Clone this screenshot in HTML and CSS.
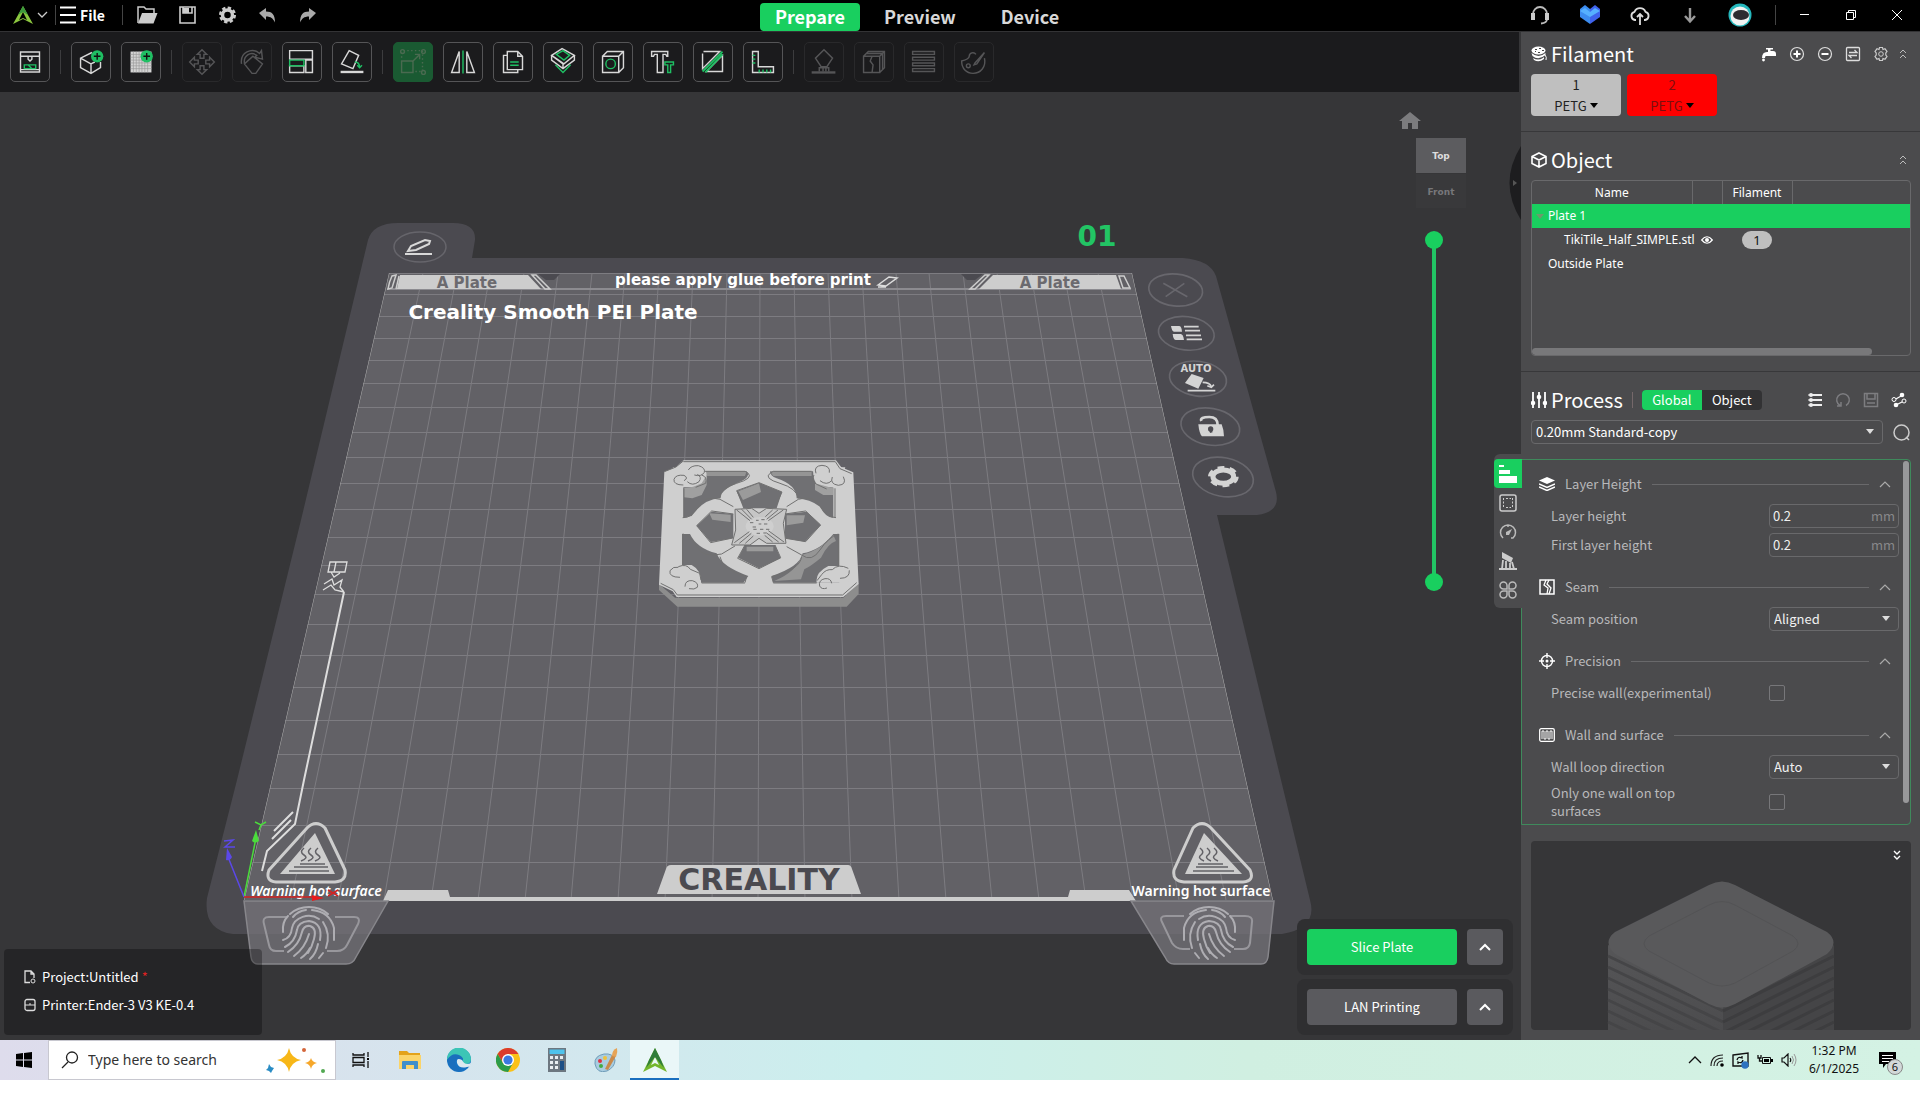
FILE: index.html
```html
<!DOCTYPE html>
<html lang="en">
<head>
<meta charset="utf-8">
<title>Creality Print</title>
<meta name="viewport" content="width=device-width, initial-scale=1">
<link rel="stylesheet" href="styles.css">
</head>
<body>
<header class="titlebar">
  <div class="title-left">
    <button class="icon-btn logo" aria-label="Application menu"><svg width="36" height="20" viewBox="0 0 36 20"><path d="M11 1 1 19l10-5 10 5zM11 7l4 8-4-2-4 2z" fill="#8cc63f" fill-rule="evenodd"/><path d="M11 1 6 10l5-3 5 3z" fill="#3c9a3c"/><path d="m26 8 4 4 5-5" fill="none" stroke="#ccc" stroke-width="1.3"/></svg></button>
    <span class="divider"></span>
    <button class="icon-btn file"><svg width="16" height="18" viewBox="0 0 16 18"><path d="M0 1.500h16M0 9h16M0 16.500h16" stroke="#fff" stroke-width="2"/></svg>File</button>
    <span class="divider"></span>
    <nav class="quick" aria-label="Quick actions">
      <button class="icon-btn" aria-label="Open"><svg width="21" height="18" viewBox="0 0 21 18"><path d="M1 17V1h6l2 2h8v4" fill="none" stroke="#ccc" stroke-width="1.500"/><path d="M5 7h15.500l-4 10.500H1z" fill="#ccc"/></svg></button>
      <button class="icon-btn" aria-label="Save"><svg width="21" height="18" viewBox="0 0 21 18"><path d="M3 1h15v16H3zM6 1h9v6H6z" fill="none" stroke="#ccc" stroke-width="1.600"/><path d="M6 2h6v5H6z" fill="#ccc"/></svg></button>
      <button class="icon-btn" aria-label="Settings"><svg width="21" height="18" viewBox="0 0 21 18"><circle cx="10.500" cy="9" r="5" fill="none" stroke="#ccc" stroke-width="3.500"/><circle cx="10.500" cy="9" r="7.300" fill="none" stroke="#ccc" stroke-width="2.400" stroke-dasharray="3.400 2.330"/></svg></button>
      <button class="icon-btn" aria-label="Undo"><svg width="21" height="18" viewBox="0 0 21 18"><path d="M2 7 9 2v3.500c6 0 9 3 9 11-2-4-4-6-9-6V14z" fill="#aaa"/></svg></button>
      <button class="icon-btn" aria-label="Redo"><svg width="21" height="18" viewBox="0 0 21 18"><path d="m19 7-7-5v3.500c-6 0-9 3-9 11 2-4 4-6 9-6V14z" fill="#aaa"/></svg></button>
    </nav>
  </div>
  <nav class="modes" aria-label="Mode">
    <button class="mode active">Prepare</button>
    <button class="mode">Preview</button>
    <button class="mode">Device</button>
  </nav>
  <div class="title-right">
    <button class="icon-btn r50" aria-label="Support"><svg width="20" height="20" viewBox="0 0 20 20"><path d="M3 9a7 7 0 0 1 14 0v5q0 4-6 4.500" fill="none" stroke="#bbb" stroke-width="1.800"/><path d="M1 8h4v7H1zM15 8h4v7h-4z" fill="#ccc"/></svg></button>
    <button class="icon-btn r50" aria-label="Model library"><svg width="20" height="20" viewBox="0 0 20 20"><path d="M0 4 5 0l5 4v15L0 12z" fill="#3c8cf0"/><path d="m10 4 5-4 5 4v8l-10 7z" fill="#3f63ec"/><path d="m0 6 5-3 5 4 5-4 5 3-10 6z" fill="#56b0ff"/></svg></button>
    <button class="icon-btn r50" aria-label="Upload"><svg width="20" height="20" viewBox="0 0 20 20"><path d="M6 15H5a4.200 4.200 0 0 1-.5-8.200 6 6 0 0 1 11 0A4.200 4.200 0 0 1 15 15h-1M10 20V9M7 12l3-3 3 3" fill="none" stroke="#ddd" stroke-width="1.800"/></svg></button>
    <button class="icon-btn r50" aria-label="Download"><svg width="20" height="20" viewBox="0 0 20 20"><path d="M10 3v13M5 11l5 5.500 5-5.500" fill="none" stroke="#999" stroke-width="2.400"/></svg></button>
    <button class="icon-btn r50" aria-label="Account"><svg width="24" height="24" viewBox="0 0 24 24"><circle cx="12" cy="12" r="11.500" fill="#25b8bd"/><circle cx="12" cy="13" r="9.500" fill="#f2f2f2"/><ellipse cx="13" cy="12" rx="8" ry="5" fill="#2d2b30"/></svg></button>
    <span class="divider win"></span>
    <button class="icon-btn r46" aria-label="Minimize"><svg width="12" height="12" viewBox="0 0 12 12"><path d="M1 5.500h9" stroke="#fff" stroke-width="1"/></svg></button>
    <button class="icon-btn r46" aria-label="Restore"><svg width="12" height="12" viewBox="0 0 12 12"><path d="M1.500 3.500h7v7h-7zM3.500 3.500v-2h7v7h-2" fill="none" stroke="#fff"/></svg></button>
    <button class="icon-btn r46" aria-label="Close"><svg width="12" height="12" viewBox="0 0 12 12"><path d="m1 1 10 10M11 1 1 11" stroke="#fff"/></svg></button>
  </div>
</header>

<div class="app">
<main class="work">
  <div class="toolbar" role="toolbar" aria-label="Tools">
    <button class="tool" aria-label="Printer"><svg viewBox="0 0 40 40"><path d="M10 9.500h20v21H10zM10 14h20M18 14v3l2 2 2-2v-3M10 28h20"/><path class="g" d="M14 23h12v4H14zM18 23l4 4"/></svg></button>
    <i class="sep"></i>
    <button class="tool" aria-label="Add model"><svg viewBox="0 0 40 40"><path d="M21 10 9 16v10l11 6 10-6V20M9 16l11 6v10M20 22l4-2"/><circle cx="26.500" cy="14" r="6.500" fill="#1fbf63" stroke="none"/><path d="M26.500 10.500v7M23 14h7" stroke="#111"/></svg></button>
    <button class="tool" aria-label="Add plate"><svg viewBox="0 0 40 40"><path d="M9 9h22v22H9z" fill="#d4d4d4" stroke="none"/><path d="M9 12h22M9 15h22M9 18h22M9 21h22M9 24h22M9 27h22M12 9v22M15 9v22M18 9v22M21 9v22M24 9v22M27 9v22" stroke="#999" stroke-width=".7"/><circle cx="26" cy="14" r="6.500" fill="#1fbf63" stroke="none"/><path d="M26 10.500v7M22.500 14h7" stroke="#111"/></svg></button>
    <i class="sep"></i>
    <button class="tool off" disabled aria-label="Move"><svg viewBox="0 0 40 40"><path d="m20 7 5 5h-3v4h-4v-4h-3zM20 33l5-5h-3v-4h-4v4h-3zM7 20l5-5v3h4v4h-4v3zM33 20l-5-5v3h-4v4h4v3z"/></svg></button>
    <button class="tool off" disabled aria-label="Rotate"><svg viewBox="0 0 40 40"><path d="m21 14 10 8-7 10h-4l-8-10zM9 22C7 10 20 4 28 11l2-3 1 9-8-2 2-2C18 8 11 14 12 21"/></svg></button>
    <button class="tool" aria-label="Arrange"><svg viewBox="0 0 40 40"><path d="M7 8h24v9H7zM7 24h15v7H7zM24 18h7v13h-7z"/><path class="g" d="M7 18h15v6H7z"/></svg></button>
    <button class="tool" aria-label="Lay on face"><svg viewBox="0 0 40 40"><path d="m17 8 10 5-6 14-12-5z"/><path d="M8 30.500h24" stroke-width="2.500"/><path class="g" d="M23 20q5 0 5 6m-2.500-2.500L28 26l2.500-2.500"/></svg></button>
    <i class="sep"></i>
    <button class="tool scale off" disabled aria-label="Scale"><svg viewBox="0 0 40 40"><path d="M8 19h12v12H8zM19 20l8-8M22 12h5v5"/><path d="M10 8h20v22h-8M8 10v6" stroke-dasharray="1.500 2.500"/><circle cx="9" cy="9" r="2"/><circle cx="31" cy="9" r="2"/><circle cx="31" cy="31" r="2"/></svg></button>
    <button class="tool" aria-label="Mirror"><svg viewBox="0 0 40 40"><path d="M16 9v22H8zM24 9v22h8z"/><path class="g" d="M20 8v24"/></svg></button>
    <button class="tool" aria-label="Clone"><svg viewBox="0 0 40 40"><path d="M14 9h11l5 5v14H14zM25 9v5h5M14 13h-4v18h15v-3"/><path class="g" d="M17 20h9M17 23.500h9"/></svg></button>
    <button class="tool" aria-label="Cut"><svg viewBox="0 0 40 40"><path d="m8 13 11-7 13 7-11 9zM8 13v5l12 9 12-9v-5M8 13l12 9v5"/><path class="g" d="m13 12 7-4 7 5-6 5zM12 23l8 8 8-8"/></svg></button>
    <button class="tool" aria-label="Hole"><svg viewBox="0 0 40 40"><path d="M9 14h17v17H9zM9 14l5-5h17v17l-5 5M26 14l5-5"/><circle class="g" cx="17.500" cy="22" r="5"/></svg></button>
    <button class="tool" aria-label="Text"><svg viewBox="0 0 40 40"><path d="M8 9h17v5h-1l-1-2h-3v19h-6V12h-3l-1 2H8z"/><path class="g" d="M22 20h9v3h-3v8h-3v-8h-3z"/></svg></button>
    <button class="tool" aria-label="Section"><svg viewBox="0 0 40 40"><path d="M10 9h17L9 27V11M30 13v17H13z"/><path class="g" d="M30 9 9 30M30 12 12 31" stroke-width="2"/></svg></button>
    <button class="tool" aria-label="Measure"><svg viewBox="0 0 40 40"><path d="M9 9h6v16h16v6H9z"/><path class="g" d="M9 13h3M9 17h3M9 21h3M16 31v-3M20 31v-3M24 31v-3M28 31v-3"/></svg></button>
    <i class="sep"></i>
    <button class="tool off" disabled aria-label="Support painting"><svg viewBox="0 0 40 40"><path d="m20 7 9 9-6 9h-6l-6-9zM15 30v-4h10v4M19 26v4M22 26v4"/><path d="M7 31h25" stroke-width="2.500"/></svg></button>
    <button class="tool off" disabled aria-label="Seam painting"><svg viewBox="0 0 40 40"><path d="M9 14h17v17H9zM9 14l5-5h17v17l-5 5M26 14l5-5M12 11h17v17M18 14l-2 5 3 4-1 8"/></svg></button>
    <button class="tool off" disabled aria-label="Layer height"><svg viewBox="0 0 40 40"><path d="M8 9h23v3H8zM8 15h23v3H8zM8 21h23v3H8zM8 27h23v3H8z"/></svg></button>
    <button class="tool off" disabled aria-label="Colour painting"><svg viewBox="0 0 40 40"><path d="M22 12c-2-3-7-2-7 2 0 3-4 4-8 5 0 8 5 13 12 13 8 0 14-7 12-16M31 10 21 21l-1 2 3-1 8-12"/><circle cx="14" cy="24" r="2"/></svg></button>
  </div>

  <section class="viewport" aria-label="Build plate">
    <svg class="scene" viewBox="0 92 1521 948" preserveAspectRatio="xMidYMin slice">
      <defs>
        <clipPath id="bed"><path d="M389 273H1132L1273 900H244z"/></clipPath>
        <g id="print" fill="none" stroke-linecap="round" stroke-width="2">
          <path d="M-19-16A27 24 0 0 1 19-16M-26 2Q-27-8-21-14M-16-13A20 19 0 0 1-3-20M3-20Q21-18 25-2V10M-26 10Q-18 8-17-2A17 15 0 0 1 10-11M14-8Q22 4 17 18M-24 17Q-14 12-12 0 -11-8 0-9 14-7 11 10M-21 22Q-10 15-7 2-5-5 1-4 8-2 5 9 3 17-1 23M-15 26Q-4 18 0 4M-8 28Q-2 24 1 18M9 14Q7 24 1 29M14 23 10 28"/>
        </g>
      </defs>
      <path d="M368 240Q373 223 398 223H453Q476 223 475 240L472 258H1183Q1210 260 1216 276L1276 492Q1281 512 1257 515H1217L1310 900Q1318 928 1282 934H233Q203 930 207 898L237 780 301 520z" fill="#4b4a50"/>
      <path d="M389 273H1132L1273 900H244z" fill="#626166"/>
      <g clip-path="url(#bed)" stroke="#7d7c81" fill="none">
        <path d="M200 273.500h1100M200 294.500h1100M200 316.500h1100M200 338.500h1100M200 360.500h1100M200 383.500h1100M200 407.500h1100M200 432.500h1100M200 457.500h1100M200 483.500h1100M200 509.500h1100M200 537.500h1100M200 565.500h1100M200 594.500h1100M200 624.500h1100M200 655.500h1100M200 687.500h1100M200 720.500h1100M200 754.500h1100M200 788.500h1100M200 825.500h1100M200 862.500h1100"/>
        <path d="M423 273 291 900M457 273 338 900M490 273 384 900M524 273 431 900M558 273 478 900M592 273 525 900M625 273 571 900M659 273 618 900M693 273 665 900M727 273 712 900M760 273 758 900M794 273 805 900M828 273 852 900M862 273 899 900M896 273 946 900M929 273 992 900M963 273 1039 900M997 273 1086 900M1031 273 1133 900M1064 273 1179 900M1098 273 1226 900"/>
        <path d="M389 273 244 900M1132 273l141 627" stroke="#aaa"/>
      </g>
      <!-- top edge labels -->
      <path d="M387 289h744" stroke="#8c8b90" stroke-width="2"/>
      <path d="M538 274h22l-6 6h-8zM961 274h22l-8 6h-8z" fill="#4b4a50"/>
      <path d="M400 275H528L541 289H397z" fill="#cdcdcd"/><path d="M532 275h4l14 14h-5zM392 276q-3 6-4 13l4-1 4-13zM399 276l-3 13" fill="none" stroke="#cdcdcd" stroke-width="1.500"/>
      <path d="M993 275H1116L1121 289H979z" fill="#cdcdcd"/><path d="M985 275h4l-14 14h-5zM1119 276h5l6 12h-7z" fill="none" stroke="#cdcdcd" stroke-width="1.500"/>
      <path d="m878 285 11-8 8 1-11 8zM878 287h8" fill="none" stroke="#ddd" stroke-width="1.500"/>
      <g class="bed-text">
        <text x="467" y="288" class="t-plate" text-anchor="middle">A Plate</text>
        <text x="1050" y="288" class="t-plate" text-anchor="middle">A Plate</text>
        <text x="743" y="285" class="t-glue" text-anchor="middle">please apply glue before print</text>
        <text x="553" y="319" class="t-name" text-anchor="middle">Creality Smooth PEI Plate</text>
        <text x="1097" y="246" class="t-num" text-anchor="middle">01</text>
      </g>
      <!-- rename tab -->
      <g fill="none" stroke="#d8d8d8" stroke-width="2"><ellipse cx="420" cy="247" rx="26" ry="15" stroke="#66656b" stroke-width="1.500"/><path d="m408 251 3-5 14-6 5 1-1 3-13 6zM405 254h27"/></g>
      <!-- plate actions -->
      <g transform="translate(1040 200) scale(.3333)" fill="none">
        <g stroke="#68676d" stroke-width="5"><ellipse cx="407" cy="270" rx="81" ry="48" transform="rotate(6 407 270)"/><ellipse cx="439" cy="400" rx="84" ry="50" transform="rotate(7 439 400)"/><ellipse cx="474" cy="536" rx="86" ry="52" transform="rotate(8 474 536)"/><ellipse cx="511" cy="680" rx="89" ry="55" transform="rotate(10 511 680)"/><ellipse cx="549" cy="831" rx="92" ry="58" transform="rotate(11 549 831)"/><path d="m370 250 72 40M433 250l-56 40"/></g>
        <path d="M393 378h24q8 0 9 17h-24q-6 0-9-17zM398 402h24q8 0 10 18h-24q-8 0-10-18zM455 522l36 12-16 32-40-17zM475 673l70 0q6 14 7 36h-66q-8-7-11-36z" fill="#d4d4d4"/>
        <path d="M432 380h44M435 392h45M438 406h45M440 418h46M443 572h83M488 547q22 0 26 13m-12-3 12 5 8-8" stroke="#d4d4d4" stroke-width="5"/>
        <path d="M484 663q-5-12 24-12 25 0 25 24" stroke="#d4d4d4" stroke-width="8"/><path d="M510 684l4 14" stroke="#4b4a50" stroke-width="8"/><circle cx="512" cy="687" r="8" fill="#4b4a50"/>
        <ellipse cx="550" cy="830" rx="31" ry="20" stroke="#d4d4d4" stroke-width="15"/><ellipse cx="550" cy="830" rx="41" ry="27" stroke="#d4d4d4" stroke-width="10" stroke-dasharray="20 16"/>
      </g>
      <text x="1196" y="372" class="t-auto" text-anchor="middle">AUTO</text>
      <!-- model -->
      <g transform="translate(620 430) scale(.3333)">
        <path d="M117 462 165 503H670L716 460V492L680 530H172L117 480z" fill="#8d8d8d"/>
        <path d="M190 91H648L664 112 700 127 716 462 670 501H170L158 484 117 464 133 125 168 111z" fill="#cfcfcf"/>
        <path d="M190 124H380Q394 140 360 155 300 180 300 205 250 208 215 258L190 263z" fill="#707073"/>
        <path d="M450 124H640V263Q618 265 600 230 570 208 530 205 530 165 470 145 450 138 450 124z" fill="#707073"/>
        <path d="M186 312H210Q230 355 290 370 305 410 385 438L370 458H186z" fill="#707073"/>
        <path d="M658 312H640Q600 362 548 370 540 410 455 438L460 458H658z" fill="#707073"/>
        <path d="M245 124h135l-5 14H262zM450 124h125v14H460zM545 375q60-15 95-60l8 18q-25 8-45 50-30 25-50 35l-10 30-80 5q70-30 82-78z" fill="#959595"/>
        <path d="M158 112h95q18 40-7 58l-60 2zM580 112h96l-20 62-60-5q-20-18-16-57zM150 405h65q30 16 28 55H165zM590 458q-5-30 35-50h65l-5 50z" fill="#cfcfcf"/>
        <path d="M192 174l28-4 25-10 15-25v30l-15 30-28 10-25-3zM585 160l55 15v20l-30 0-25-15z" fill="#a0a0a0"/>
        <path d="M417 158 486 186 470 235H370L350 183zM417 415 355 383 375 345H465L482 385zM230 287 275 245 340 252V325L272 336zM602 285 560 245 495 252V325L555 335z" fill="#707073"/>
        <path d="m355 184 62-24 6 26-54 24zM268 250l64 4v22l-55-7zM500 256l55 0-5 22-50 8zM380 350h80v14h-80z" fill="#9b9b9b"/>
        <path d="M345 238 395 235 417 250 440 235 500 238 490 280 498 340 440 340 417 325 390 345 335 345 347 300z" fill="#c6c6c6"/>
        <ellipse cx="419" cy="289" rx="42" ry="28" fill="#cfcfcf"/>
        <g fill="none" stroke="#707070" stroke-width="3">
          <path d="M190 95H646L660 116 695 131M710 458 668 495H172L160 479 122 460M133 125l35-14 22-18M300 205Q300 175 350 160T385 130L375 124H255M535 205Q530 175 480 160T450 130L460 124H575M188 263Q215 265 235 230T300 208L340 230M648 263Q620 262 600 228T535 208L500 230M188 312Q212 315 230 350T305 372L345 348M655 312Q625 322 600 360T545 375L500 350M300 380Q305 420 380 440L375 458M545 380Q540 420 455 440L460 458"/>
          <path d="M417 158 486 186 470 222M417 158l-67 24 20 43M340 252l-65-9-45 44 42 51 66-14M495 252l62-9 45 42-45 50-60-10M375 345l-22 40 64 31 65-33-17-38M192 175v88M645 175v88M188 315v90M655 315v90M245 459h130M460 459h130"/>
          <path d="M345 238 395 235 417 250 440 235 500 238 490 280 498 340 440 340 417 325 390 345 335 345 347 300z"/>
          <path d="M350 240l40 32M365 238l30 30M380 238l20 24M490 240l-45 32M474 240l-34 28M458 240l-22 20M343 338l45-33M358 340l36-30M376 340l24-22M492 336l-47-34M476 336l-36-27M458 336l-24-20"/>
          <path d="M190 165q-30 0-28-17 5-15 30-12 15 8 0 16M205 120q8-14 30-13 22 6 18 20-8 14-30 8M202 155q15 15 35 0 10-14-5-22M588 130q-8-22 18-24 26 2 22 22M670 140q12 24-15 26-26-4-18-25M600 152q20 16 35 0M180 442q-34 0-30-20 10-14 25-10M195 470q0-20 22-18 20 6 15 20-8 8-25 4M660 445q30 0 28-24M635 460q-2-16-20-14-20 4-16 22 6 12 22 6"/>
          <path d="M245 135q18 6 12 25l-30 12M582 135q-10 18 8 28l30 14M175 410q25-10 36 8l28 12 4 20M685 415q-30-15-48 4-20-2-32 15l-14 18"/>
          <path d="M390 278h10m8-7h8m8-2h10m-36 22h10m8-9h8m8 0h10m-42 16h10m10 0h10m8 0h10m-38 12h10m10-1h10"/>
        </g>
      </g>
      <!-- front edge -->
      <path d="M383 901 388 890H448L450 897H1068L1070 890H1129L1136 901z" fill="#cdcdcd"/>
      <path d="M657 894 666 869Q667 865 671 865H848Q851 865 852 869L861 894z" fill="#cdcdcd"/>
      <text x="759" y="890" class="t-brand" text-anchor="middle">CREALITY</text>
      <g fill="#77767b" fill-opacity=".75" stroke="#87868b" stroke-width="1.500"><path d="M244 901H388L356 957Q353 964 346 964H258Q252 964 251 957z"/><path d="M1131 901H1274L1268 957Q1267 964 1261 964H1174Q1168 964 1165 957z"/></g>
      <g fill="none" stroke="#98979c" stroke-width="2"><path d="M287 917H269Q262 917 264 924L269 945Q270 951 276 951H284M335 917H354Q361 917 358 924L347 945Q344 951 337 951H327M1184 916H1166Q1159 916 1162 922L1172 943Q1176 949 1183 949H1190M1230 916H1245Q1253 916 1252 922L1250 943Q1249 949 1243 949H1234"/></g>
      <use href="#print" x="309" y="930" stroke="#aeadb2"/><use href="#print" transform="translate(1209 930) scale(-1 1)" stroke="#aeadb2"/>
      <g fill="none" stroke="#cdcdcd" stroke-width="3" stroke-linejoin="round"><path d="M307 828Q316 819 325 828L345 870Q347 881 335 882H276Q265 881 269 870zM1193 828Q1202 819 1211 828L1250 870Q1255 881 1243 882H1184Q1172 881 1174 870z"/></g>
      <path d="M315 833 335 874H280zM1204 833 1242 874H1185z" fill="#cdcdcd"/>
      <path d="M304 848q-5 4 0 7t-3 6M311 848q-5 4 0 7t-3 6M318 848q-5 4 0 7t-3 6M300 864h25M294 867h34M289 871h40M1200 848q5 4 1 7t3 6M1207 848q5 4 1 7t3 6M1214 848q5 4 1 7t3 6M1198 864h25M1196 867h32M1193 871h41" fill="none" stroke="#626166" stroke-width="1.500"/>
      <text x="316" y="896" class="t-warn slant" text-anchor="middle">Warning hot surface</text>
      <text x="1201" y="896" class="t-warn" text-anchor="middle">Warning hot surface</text>
      <!-- nozzle wipe guide -->
      <g fill="none" stroke="#ddd" stroke-width="2"><path d="M344 592 304 780 295 824 267 851 262 871M293 812 274 831M291 820 272 839"/><path d="M330 562h17l-2 10h-17zM336 562l-2 10M331 572l3 5 6-4M324 584l8-5 2 6 8-5-2 7 4 5M323 590l8-5 4 5 9 2" stroke-width="1.300"/></g>
      <!-- axes -->
      <g stroke-width="1.500"><path d="M244 897 256 838" stroke="#4bdc3c"/><path d="M256 830l3 11q-4 3-7 0z" fill="#4bdc3c"/><path d="M244 897 228 857" stroke="#5b48e8"/><path d="M227 848l5 9q-2 4-6 3z" fill="#5b48e8"/><path d="M244 897h70" stroke="#d32222"/><path d="M324 898l-12-3v6z" fill="#e81c1c"/></g>
      <g fill="none" stroke-width="1.500"><path d="M255 822l6 3 5-3M261 825l-2 5" stroke="#4bdc3c"/><path d="M224 841l9-1-8 7 10 0" stroke="#5b48e8"/><path d="m328 890 10 6M338 890l-10 6" stroke="#d32222"/></g>
      <!-- view cube and layer slider -->
      <path d="M1410 112l11 9h-3v8h-6v-6h-4v6h-6v-8h-3z" fill="#7c7c7e"/>
      <path d="M1416 138h50v35h-50z" fill="#5c5c5f"/><path d="M1416 174h50v34h-50z" fill="#39393b"/>
      <text x="1441" y="159" class="t-cube" text-anchor="middle">Top</text><text x="1441" y="195" class="t-cube dim" text-anchor="middle">Front</text>
      <path d="M1434 240V582" stroke="#22c464" stroke-width="4"/><circle cx="1434" cy="240" r="9" fill="#19cf5f"/><circle cx="1434" cy="582" r="9" fill="#19cf5f"/>
      <path d="M1521 146Q1498 183 1521 220z" fill="#1d1d1f"/><path d="m1513 180 4 3-4 3z" fill="#555"/>
    </svg>
    <div class="info">
      <p><svg width="12" height="14" viewBox="0 0 12 14"><path d="M6 12.500H1V1h6l3 3v4M7 1v3h3" fill="none" stroke="#ddd" stroke-width="1.300"/><circle cx="9" cy="11" r="2" fill="none" stroke="#ddd"/></svg>Project:Untitled <span class="star">*</span></p>
      <p><svg width="12" height="14" viewBox="0 0 12 14"><rect x="1" y="1.500" width="10" height="11" rx="2" fill="none" stroke="#ddd" stroke-width="1.300"/><path d="M1 7h10M6 5v2" stroke="#ddd"/></svg>Printer:Ender-3 V3 KE-0.4</p>
    </div>
    <div class="actions">
      <div class="action"><button class="big go">Slice Plate</button><button class="more" aria-label="Slice options"><svg width="12" height="8" viewBox="0 0 12 8"><path d="m1 7 5-5 5 5" fill="none" stroke="#fff" stroke-width="2"/></svg></button></div>
      <div class="action"><button class="big">LAN Printing</button><button class="more" aria-label="Print options"><svg width="12" height="8" viewBox="0 0 12 8"><path d="m1 7 5-5 5 5" fill="none" stroke="#fff" stroke-width="2"/></svg></button></div>
    </div>
  </section>
</main>

<aside class="side">
  <section class="block first">
    <div class="head">
      <svg width="16" height="16" viewBox="0 0 16 16"><ellipse cx="7.500" cy="4.500" rx="7" ry="4" fill="#fff"/><path d="M.5 7q7 6 14 0v2q-7 6-13 1zM2 12q5 3 10 0l1-1v2q-5 4-10 1z" fill="#fff"/><path d="M14 9q2 2 1 5" fill="none" stroke="#fff"/><path d="M4 3.500h2m2-1h2m1 2h2m-6 2h2m-5-1h1" stroke="#444"/></svg>
      <h2>Filament</h2>
      <div class="head-tools">
        <button class="icon-btn r28" aria-label="Flush"><svg width="16" height="16" viewBox="0 0 16 16"><path d="M5 2h7v1.500H9.500V5H12q3 0 3 3v2H5q-1 0-1 2H1q0-6 5-6h1V3.500H5z" fill="#fff"/><circle cx="2.500" cy="14" r="1.400" fill="#fff"/></svg></button>
        <button class="icon-btn r28" aria-label="Add filament"><svg width="16" height="16" viewBox="0 0 16 16"><circle cx="8" cy="8" r="6.500" fill="none" stroke="#ddd" stroke-width="1.200"/><path d="M8 4.500v7M4.500 8h7" stroke="#fff" stroke-width="2"/></svg></button>
        <button class="icon-btn r28" aria-label="Remove filament"><svg width="16" height="16" viewBox="0 0 16 16"><circle cx="8" cy="8" r="6.500" fill="none" stroke="#ddd" stroke-width="1.200"/><path d="M4.500 8h7" stroke="#fff" stroke-width="2"/></svg></button>
        <button class="icon-btn r28" aria-label="Sync filaments"><svg width="16" height="16" viewBox="0 0 16 16"><rect x="1.500" y="1.500" width="13" height="13" rx="1" fill="none" stroke="#ddd" stroke-width="1.300"/><path d="M4 6.500h8L9.500 4M12 9.500H4L6.500 12" fill="none" stroke="#ddd" stroke-width="1.300"/></svg></button>
        <button class="icon-btn r28" aria-label="Filament settings"><svg width="16" height="16" viewBox="0 0 16 16"><path d="m6.500 1.500h3l.5 2 2-.7 2 2.700-1.200 1.500v2L14 10.500l-2 2.700-2-.7-.5 2h-3l-.5-2-2 .7-2-2.700L3.200 9V7L2 5.500l2-2.700 2 .7z" fill="none" stroke="#ccc" stroke-width="1.200"/><circle cx="8" cy="8" r="2.300" fill="none" stroke="#ccc"/></svg></button>
        <button class="icon-btn r16" aria-label="Collapse filament"><svg width="8" height="10" viewBox="0 0 8 10"><path d="m1 4 3-3 3 3M1 9l3-3 3 3" fill="none" stroke="#bbb"/></svg></button>
      </div>
    </div>
    <div class="spools">
      <button class="spool"><span>1</span><span>PETG<i class="caret"></i></span></button>
      <button class="spool red"><span>2</span><span>PETG<i class="caret"></i></span></button>
    </div>
  </section>

  <section class="block">
    <div class="head">
      <svg width="16" height="16" viewBox="0 0 16 16"><path d="m8 1 7 3.500v7L8 15l-7-3.500v-7zM1 4.500 8 8l7-3.500M8 8v7" fill="none" stroke="#fff" stroke-width="1.600"/></svg>
      <h2>Object</h2>
      <div class="head-tools"><button class="icon-btn r16" aria-label="Collapse objects"><svg width="8" height="10" viewBox="0 0 8 10"><path d="m1 4 3-3 3 3M1 9l3-3 3 3" fill="none" stroke="#bbb"/></svg></button></div>
    </div>
    <div class="tree">
      <table>
        <colgroup><col class="c1"><col class="c2"><col class="c3"><col></colgroup>
        <thead><tr><th>Name</th><th></th><th>Filament</th><th></th></tr></thead>
        <tbody>
          <tr class="sel"><td class="l1"><i class="twist"></i>Plate 1</td><td></td><td></td><td></td></tr>
          <tr><td class="l2">TikiTile_Half_SIMPLE.stl</td><td class="eye"><svg width="12" height="10" viewBox="0 0 12 10"><path d="M.7 5Q6-1.500 11.300 5 6 11.500.7 5z" fill="none" stroke="#fff" stroke-width="1.200"/><circle cx="6" cy="5" r="2" fill="#fff"/></svg></td><td class="mid"><span class="chip">1</span></td><td></td></tr>
          <tr><td class="l1">Outside Plate</td><td></td><td></td><td></td></tr>
        </tbody>
      </table>
      <div class="hbar"></div>
    </div>
  </section>

  <section class="block last">
    <div class="head">
      <svg width="16" height="16" viewBox="0 0 16 16"><path d="M2 0v16M8 0v16M14 0v16" stroke="#fff" stroke-width="1.800"/><circle cx="2" cy="11" r="2.300" fill="#fff"/><circle cx="8" cy="5" r="2.300" fill="#fff"/><circle cx="14" cy="11" r="2.300" fill="#fff"/></svg>
      <h2>Process</h2>
      <span class="bar"></span>
      <div class="seg"><button class="on">Global</button><button>Object</button></div>
      <div class="head-tools">
        <button class="icon-btn r28" aria-label="Compare presets"><svg width="16" height="16" viewBox="0 0 16 16"><path d="M5 3h10M5 8h10M5 13h10" stroke="#eee" stroke-width="2"/><path d="M1 3h4M1 8h4M1 13h4" stroke="#eee"/><circle cx="4" cy="3" r="2" fill="#eee"/><circle cx="4" cy="8" r="2" fill="#eee"/><circle cx="4" cy="13" r="2" fill="#eee"/></svg></button>
        <button class="icon-btn r28" aria-label="Reset"><svg width="16" height="16" viewBox="0 0 16 16"><path d="M5 13.500A6.300 6.300 0 1 1 11 13.500M2 14h4v-4" fill="none" stroke="#7d7d80" stroke-width="1.500"/></svg></button>
        <button class="icon-btn r28" aria-label="Save preset"><svg width="16" height="16" viewBox="0 0 16 16"><path d="M1.500 1.500h13v13h-13zM4 1.500V7h8V1.500M4 11h8" fill="none" stroke="#7d7d80" stroke-width="1.500"/></svg></button>
        <button class="icon-btn r28" aria-label="Relations"><svg width="16" height="16" viewBox="0 0 16 16"><path d="M3 8l9-5M5 13l8-4" stroke="#fff" stroke-width="1.300"/><circle cx="3" cy="7.500" r="2" fill="#4b4b4d" stroke="#fff"/><circle cx="11" cy="3" r="2.300" fill="#fff"/><circle cx="13" cy="9" r="2" fill="#4b4b4d" stroke="#fff"/><circle cx="5" cy="13" r="2.300" fill="#fff"/></svg></button>
      </div>
    </div>
    <div class="preset">
      <div class="drop"><select aria-label="Process preset"><option>0.20mm Standard-copy</option></select></div>
      <button class="icon-btn" aria-label="Search settings"><svg width="17" height="17" viewBox="0 0 17 17"><circle cx="8.500" cy="8.500" r="7.500" fill="none" stroke="#ccc" stroke-width="1.500"/><path d="m13 13 3 3" stroke="#ccc" stroke-width="1.500"/></svg></button>
    </div>
  </section>

  <div class="params">
    <nav class="cats" aria-label="Setting categories">
      <button class="cat on" aria-label="Quality"><svg width="18" height="18" viewBox="0 0 18 18"><path d="M0 0h5v2H0zM0 5h11v4H0zM0 11h18v7H0z" fill="#fff"/></svg></button>
      <button class="cat" aria-label="Strength"><svg width="18" height="18" viewBox="0 0 18 18"><rect x="1" y="1" width="16" height="16" rx="2" fill="none" stroke="#ccc" stroke-width="1.500"/><path d="M4.500 4v10M13.500 4v10M7 4.500h5M7 13.500h5" stroke="#ccc" stroke-dasharray="2 1.500"/></svg></button>
      <button class="cat" aria-label="Speed"><svg width="18" height="18" viewBox="0 0 18 18"><path d="M4 15A7.500 7.500 0 1 1 14 15H12M9 2v2" fill="none" stroke="#bbb" stroke-width="1.500"/><path d="M13 6 7 9v3h3z" fill="#bbb"/></svg></button>
      <button class="cat" aria-label="Support"><svg width="18" height="18" viewBox="0 0 18 18"><path d="m3 0 11 6-2 5-9-5z" fill="#ccc"/><path d="M0 17h18M3 17l1-9M7 17V9M11 17v-6M15 17l-2-7" stroke="#ccc" stroke-width="1.800"/></svg></button>
      <button class="cat" aria-label="Others"><svg width="18" height="18" viewBox="0 0 18 18"><path d="M8 8H4.500A3.500 3.500 0 1 1 8 4.500zM10 8V4.500A3.500 3.500 0 1 1 13.500 8zM8 10v3.500A3.500 3.500 0 1 1 4.500 10zM10 10h3.500A3.500 3.500 0 1 1 10 13.500z" fill="none" stroke="#bbb" stroke-width="1.500"/></svg></button>
    </nav>
    <form class="groups">
      <section>
        <h3><svg width="16" height="14" viewBox="0 0 16 14"><path d="m8 0 8 3.500L8 7 0 3.500z" fill="#fff"/><path d="m0 7 8 3.500L16 7M0 10l8 3.500 8-3.500" fill="none" stroke="#fff" stroke-width="1.500"/></svg>Layer Height<i class="rule"></i><svg width="12" height="8" viewBox="0 0 12 8"><path d="m1 7 5-5 5 5" fill="none" stroke="#aaa" stroke-width="1.200"/></svg></h3>
        <div class="row"><label for="lh">Layer height</label><span class="num"><input id="lh" type="text" value="0.2"><span>mm</span></span></div>
        <div class="row"><label for="flh">First layer height</label><span class="num"><input id="flh" type="text" value="0.2"><span>mm</span></span></div>
      </section>
      <section>
        <h3><svg width="16" height="16" viewBox="0 0 16 16"><path d="M1 1h14v14H1z" fill="none" stroke="#fff" stroke-width="1.500"/><path d="M7 1 5 6l4 3-1 6M10 1 8 5l4 4-2 6" fill="none" stroke="#fff" stroke-width="1.300"/></svg>Seam<i class="rule"></i><svg width="12" height="8" viewBox="0 0 12 8"><path d="m1 7 5-5 5 5" fill="none" stroke="#aaa" stroke-width="1.200"/></svg></h3>
        <div class="row"><label for="sp">Seam position</label><span class="drop"><select id="sp"><option>Aligned</option></select></span></div>
      </section>
      <section>
        <h3><svg width="16" height="16" viewBox="0 0 16 16"><circle cx="8" cy="8" r="5.500" fill="none" stroke="#fff" stroke-width="1.400"/><circle cx="8" cy="8" r="1.500" fill="#fff"/><path d="M8 0v5M8 11v5M0 8h5M11 8h5" stroke="#fff" stroke-width="1.400"/></svg>Precision<i class="rule"></i><svg width="12" height="8" viewBox="0 0 12 8"><path d="m1 7 5-5 5 5" fill="none" stroke="#aaa" stroke-width="1.200"/></svg></h3>
        <div class="row"><label for="pw">Precise wall(experimental)</label><span class="tick"><input id="pw" type="checkbox"></span></div>
      </section>
      <section>
        <h3><svg width="16" height="14" viewBox="0 0 16 14"><rect x=".7" y=".7" width="14.600" height="12.600" rx="1.500" fill="none" stroke="#fff" stroke-width="1.300"/><path d="M3 11V3h2v8h2V3h2v8h2V3h2v8" fill="none" stroke="#fff"/></svg>Wall and surface<i class="rule"></i><svg width="12" height="8" viewBox="0 0 12 8"><path d="m1 7 5-5 5 5" fill="none" stroke="#aaa" stroke-width="1.200"/></svg></h3>
        <div class="row"><label for="wd">Wall loop direction</label><span class="drop"><select id="wd"><option>Auto</option></select></span></div>
        <div class="row"><label for="ow">Only one wall on top surfaces</label><span class="tick"><input id="ow" type="checkbox"></span></div>
      </section>
    </form>
    <div class="vbar"></div>
  </div>

  <figure class="hint">
    <svg viewBox="0 0 380 189" preserveAspectRatio="xMidYMin slice">
      <defs><linearGradient id="lf" x2="0" y2="1"><stop offset="0" stop-color="#565658"/><stop offset="1" stop-color="#4c4c4e"/></linearGradient></defs>
      <path d="M77 104V189H192V165z" fill="url(#lf)"/><path d="M303 104V189H192V165z" fill="#454547"/>
      <path d="M77 115 192 170 M77 126l115 55M77 137l115 55M77 148l115 55M77 159l115 55M77 170l115 55M77 181l115 55" stroke="#454547" stroke-width="3"/>
      <path d="M303 115 192 170M303 126 192 181M303 137 192 192M303 148 192 203M303 159 192 214M303 170 192 225M303 181 192 236" stroke="#3d3d3f" stroke-width="3"/>
      <path d="M178 44Q191 37 204 44L296 91Q309 101 296 113L204 163Q191 170 178 163L84 113Q71 101 84 91z" fill="#59595b"/>
      <path d="M178 64Q191 57 204 64L262 95Q272 103 262 110L204 142Q191 148 178 142L118 110Q108 103 118 95z" fill="none" stroke="#535355"/>
    </svg>
    <button class="icon-btn fold" aria-label="Collapse hint"><svg width="8" height="10" viewBox="0 0 8 10"><path d="m1 1 3 3 3-3M1 6l3 3 3-3" fill="none" stroke="#fff" stroke-width="1.400"/></svg></button>
  </figure>
</aside>
</div>

<footer class="taskbar">
  <button class="icon-btn start" aria-label="Start"><svg width="16" height="16" viewBox="0 0 16 16"><path d="m0 2 7-1v6.500H0zM8 1l8-1v7.500H8zM0 8.500h7V15l-7-1zM8 8.500h8V16l-8-1z" fill="#000"/></svg></button>
  <label class="search"><svg width="18" height="18" viewBox="0 0 18 18"><circle cx="11" cy="6.500" r="5.500" fill="none" stroke="#222" stroke-width="1.300"/><path d="m7 11-6 6" stroke="#222" stroke-width="1.300"/></svg><input type="text" placeholder="Type here to search"><svg width="60" height="26" viewBox="0 0 60 26"><path d="M24 1q2 10 12 12-10 2-12 12-2-10-12-12 10-2 12-12z" fill="#f7b718"/><path d="M46 11q1 4 6 5-5 1-6 6-1-5-6-6 5-1 6-5z" fill="#f6a72a"/><path d="m4 17 2 3 3 1-2 3-1 2-2-2-3-1 2-2z" fill="#2a8cc4"/><circle cx="39" cy="3" r="2" fill="#d4663a"/><circle cx="58" cy="24" r="2" fill="#52a852"/></svg></label>
  <nav class="pins" aria-label="Pinned apps">
    <button class="icon-btn pin" aria-label="Task view"><svg width="18" height="18" viewBox="0 0 18 18"><path d="M1 2v2h11V2M1 16v-2h11v2M1 6.500h11v5H1zM16 1v5M16 10v7" fill="none" stroke="#111" stroke-width="1.300"/><path d="M15 7h2v2h-2z"/></svg></button>
    <button class="icon-btn pin" aria-label="File Explorer"><svg width="22" height="22" viewBox="0 0 22 22"><path d="M0 2h8l2 2h11v5H0z" fill="#e3a21a"/><path d="M0 6h22v14H0z" fill="#fbd469"/><path d="M3 20v-7q0-1 1-1h14q1 0 1 1v7h-4v-4H7v4z" fill="#3f8fcb"/></svg></button>
    <button class="icon-btn pin" aria-label="Edge"><svg width="24" height="24" viewBox="0 0 24 24"><circle cx="12" cy="12" r="12" fill="#1673c4"/><path d="M0 12A12 12 0 0 1 24 11q0 6-7 5-3-1-1-4 0-4-5-4-8 0-11 4z" fill="#3cc5b6"/><path d="M0 12Q5 4 12 7q4 2 4 5-6-4-8 1-1 7 8 10-12 3-16-11z" fill="#1a6fbd"/><path d="M15 12q-6-3-5 3 2 6 10 4 2 0 3-1 1-2 1-3-6 3-9-3z" fill="#dceaf0"/></svg></button>
    <button class="icon-btn pin" aria-label="Chrome"><svg width="24" height="24" viewBox="0 0 24 24"><circle cx="12" cy="12" r="12" fill="#fbc116"/><path d="M1.600 6A12 12 0 0 1 22.400 6H12L7 15z" fill="#dc3b2d"/><path d="M1.600 6A12 12 0 0 0 12 24l5-9H7z" fill="#2c9c4a"/><circle cx="12" cy="12" r="6" fill="#fff"/><circle cx="12" cy="12" r="4.600" fill="#3b78e0"/></svg></button>
    <button class="icon-btn pin" aria-label="Calculator"><svg width="18" height="24" viewBox="0 0 18 24"><path d="M0 0h18v24H0z" fill="#6d7780"/><path d="M1.500 1.500h15V6h-15z" fill="#4fc3ec"/><path d="M2 8h3v3H2zM7 8h3v3H7zM12 8h3v3h-3zM2 13h3v3H2zM7 13h3v3H7zM2 18h3v3H2zM7 18h3v3H7z" fill="#e8edf0"/><path d="M12 13h4v9h-4z" fill="#1d4f86"/></svg></button>
    <button class="icon-btn pin" aria-label="Paint"><svg width="24" height="24" viewBox="0 0 24 24"><path d="M1 16Q0 8 10 6q9-1 11 6 0 7-8 11-10 3-12-7z" fill="#a9cde0" stroke="#6f9cb8"/><circle cx="6" cy="13" r="2" fill="#d34"/><circle cx="11" cy="10" r="2" fill="#f0c23c"/><circle cx="7" cy="18" r="2" fill="#4a4"/><path d="m11 21 7-14 4 1-8 14z" fill="#c98a4b"/><path d="M18 8q0-6 5-8 1 4-1 9z" fill="#e6a457"/></svg></button>
    <button class="icon-btn pin current" aria-label="Creality Print"><svg width="24" height="24" viewBox="0 0 24 24"><path d="M12 0 0 24l12-6 12 6zM12 9l4 8-4-2-4 2z" fill="#73b62c" fill-rule="evenodd"/><path d="M12 0 6 12l-3 8 9-11 9 11-3-8z" fill="#2f7d3a"/></svg></button>
  </nav>
  <div class="tray">
    <button class="icon-btn" aria-label="Hidden icons"><svg width="14" height="8" viewBox="0 0 14 8"><path d="m1 7 6-6 6 6" fill="none" stroke="#111" stroke-width="1.300"/></svg></button>
    <svg width="14" height="14" viewBox="0 0 14 14"><path d="M1 13Q1 2 13 2M4 13q0-8 9-8M7 13q0-5 6-5" fill="none" stroke="#222" stroke-width="1.200"/><circle cx="12" cy="12" r="1.800"/></svg>
    <svg width="17" height="17" viewBox="0 0 17 17"><path d="m1 3 15-2v13H1z" fill="none" stroke="#111" stroke-width="1.400"/><path d="M5 8q1-4 5-2V4M11 8q-1 4-5 2v2" fill="none" stroke="#111" stroke-width="1.300"/><circle cx="13" cy="13" r="3.700" fill="#2c72c0"/></svg>
    <svg width="16" height="12" viewBox="0 0 16 12"><path d="M5.500 3.500h8v6h-8z" fill="none" stroke="#111"/><path d="M7 5h5v3H7zM14 5h2v3h-2z"/><path d="M1 1v3h3V1M2.500 4v3H5" fill="none" stroke="#111" stroke-width="1.300"/></svg>
    <svg width="16" height="14" viewBox="0 0 16 14"><path d="M1 5h2l4-4v12L3 9H1zM9 5q1.500 2 0 4" fill="none" stroke="#111" stroke-width="1.200"/><path d="M11 3q3 4 0 8M13 1q4 6 0 12" fill="none" stroke="#999"/></svg>
    <time class="clock"><span>1:32 PM</span><span>6/1/2025</span></time>
    <button class="icon-btn note" aria-label="Notifications"><svg width="17" height="16" viewBox="0 0 17 16"><path d="M0 0h17v12H7l-3 4v-4H0z"/><path d="M3 3.500h11M3 6.500h11M3 9.500h7" stroke="#fff"/></svg><span class="badge">6</span></button>
  </div>
</footer>
</body>
</html>
```

FILE: styles.css
```css
:root {
  --green: #19cf5f;
  --panel: #4b4b4d;
  --line: #69696b;
  --ui: "Noto Sans CJK SC", "Noto Sans", sans-serif;
  --sys: "Noto Sans", "Open Sans", sans-serif;
}
* { box-sizing: border-box; }
body {
  margin: 0;
  height: 100vh;
  padding-bottom: 20px;
  display: flex;
  flex-direction: column;
  background: #fff;
  color: #fff;
  font: 13px/20px var(--ui);
  overflow: hidden;
}
button, input, select { font: inherit; color: inherit; }
h2, h3, p, figure { margin: 0; font-weight: 400; }
svg { flex: none; display: block; }
.icon-btn {
  border: 0; padding: 0; background: none;
  display: flex; align-items: center; justify-content: center;
}

/* title bar */
.titlebar {
  height: 32px;
  flex: none;
  display: grid;
  grid-template-columns: 1fr 320px 1fr;
  background: #000;
  border-bottom: 1px solid #333335;
}
.title-left, .title-right { display: flex; align-items: center; padding-bottom: 2px; }
.title-left { padding-left: 12px; }
.title-right { justify-content: flex-end; }
.divider { width: 1px; height: 20px; background: #444; }
.logo { margin-right: 7px; }
.file { gap: 4px; margin: 0 17px 0 4px; font-size: 14px; font-weight: 700; }
.quick { display: flex; gap: 19px; margin-left: 14px; }
.modes { display: flex; gap: 10px; align-items: flex-end; margin-left: -40px; margin-right: 40px; }
.mode {
  flex: 0 0 100px; height: 28px; padding: 0 0 2px;
  border: 0; border-radius: 4px; background: none;
  font-size: 18px; line-height: 24px; font-weight: 700; color: #d8d8d8;
}
.mode.active { background: var(--green); color: #fff; }
.r50 { width: 50px; }
.r46 { width: 46px; }
.win { margin: 0 6px 0 10px; }

/* main split */
.app { flex: 1; min-height: 0; display: grid; grid-template-columns: 1fr 399px; }
.work { display: flex; flex-direction: column; min-width: 0; background: #363638; }
.toolbar {
  height: 60px; flex: none; padding: 0 10px; margin-right: 2px;
  display: flex; align-items: center; gap: 10px; background: #1b1b1d;
}
.tool {
  width: 40px; height: 40px; padding: 0; flex: none;
  border: 1px solid #555557; border-radius: 5px; background: none;
}
.tool svg { width: 38px; height: 38px; fill: none; stroke: #d8d8d8; stroke-width: 1.5; }
.tool .g { stroke: #1fbf63; }
.tool.off { border-color: #29292b; }
.tool.off svg { stroke: #555557; }
.tool.scale { background: #1a5a32; border-color: #1a5a32; }
.tool.scale svg { stroke: #4a6a50; }
.sep { width: 1px; height: 24px; background: #3c3c3e; }

/* viewport */
.viewport { position: relative; flex: 1; min-height: 0; overflow: hidden; }
.scene { position: absolute; inset: 0; width: 100%; height: 100%; }
.scene text { font-family: "DejaVu Sans", sans-serif; font-weight: 700; fill: #fff; }
.scene .t-plate { font-size: 15px; fill: #6b6a6f; }
.scene .t-glue { font-size: 15px; }
.scene .t-name { font-size: 20px; }
.scene .t-num { font-size: 28px; fill: #22c464; }
.scene .t-auto { font-size: 10px; fill: #d4d4d4; }
.scene .t-brand { font-size: 30px; fill: #4b4a50; }
.scene .t-warn { font: 600 14px "Noto Sans", sans-serif; }
.scene .slant { font-style: italic; }
.scene .t-cube { font-size: 9px; fill: #ddd; }
.scene .dim { fill: #77777a; }
.info {
  position: absolute; left: 4px; bottom: 5px; width: 258px; height: 86px;
  padding: 18px 20px; border-radius: 4px; background: rgba(0, 0, 0, .3);
  display: grid; gap: 8px; align-content: start;
}
.info p { display: flex; align-items: center; gap: 6px; }
.star { color: #d22; margin-left: -3px; }
.actions { position: absolute; right: 8px; bottom: 5px; display: grid; gap: 4px; }
.action { display: flex; gap: 10px; padding: 10px; border-radius: 8px; background: #2f2f31; }
.big, .more {
  height: 36px; border: 0; border-radius: 4px; background: #5a5a5e;
  display: flex; align-items: center; justify-content: center; padding: 0;
}
.big { width: 150px; }
.more { width: 36px; }
.go { background: var(--green); }

/* sidebar */
.side { display: flex; flex-direction: column; background: var(--panel); min-height: 0; padding-bottom: 10px; }
.block { padding: 16px 9px 15px 10px; border-bottom: 1px solid #38383a; display: grid; gap: 8px; }
.first { padding-top: 10px; }
.last { border: 0; }
.head { display: flex; align-items: center; height: 24px; gap: 4px; }
.head h2 { font-size: 20px; line-height: 24px; }
.head-tools { display: flex; margin-left: auto; align-items: center; }
.r28 { width: 28px; height: 24px; }
.r16 { width: 16px; height: 24px; }
.last .head-tools { margin-right: -2px; }
.spools { display: flex; gap: 6px; }
.spool {
  width: 90px; height: 42px; padding: 0; border: 0; border-radius: 4px;
  background: #bfbfbf; color: #222; display: grid; align-content: center;
}
.spool span { line-height: 21px; display: flex; align-items: center; justify-content: center; gap: 3px; }
.spool.red { background: #f00; color: #7c0f0f; }
.caret, .twist { border: 4px solid transparent; border-top: 5px solid #000; border-bottom: 0; }

.tree { height: 176px; border: 1px solid var(--line); border-radius: 4px; display: flex; flex-direction: column; overflow: hidden; }
.tree table { width: 100%; table-layout: fixed; border-collapse: collapse; font: 12px/16px var(--sys); }
.c1 { width: 160px; }
.c2 { width: 30px; }
.c3 { width: 70px; }
.tree th { height: 23px; padding: 0; font-weight: 400; border-right: 1px solid var(--line); }
.tree th:last-child { border: 0; }
.tree td { height: 24px; padding: 0; white-space: nowrap; }
.tree .sel { background: var(--green); }
.tree .l1 { padding-left: 16px; }
.twist { float: left; margin: 6px 0 0 -12px; border-top-color: #6b9c6b; }
.tree .l2 { padding-left: 32px; }
.eye svg { margin-left: 9px; }
.mid { text-align: center; }
.chip { display: inline-block; width: 30px; height: 18px; line-height: 18px; border-radius: 9px; background: #bfbfbf; color: #111; font-size: 13px; }
.hbar { margin-top: auto; height: 7px; width: 340px; border-radius: 4px; background: #78787a; }

.bar { width: 1px; height: 16px; background: #75686a; margin: 0 5px; }
.seg { display: flex; border-radius: 4px; overflow: hidden; background: #323234; }
.seg button { width: 60px; height: 20px; border: 0; padding: 0; background: none; line-height: 20px; }
.seg .on { background: var(--green); }
.preset { display: flex; gap: 8px; }
.preset .drop { flex: 1; }
.preset .icon-btn { width: 20px; }
.drop { position: relative; display: block; }
.drop::after {
  content: ""; position: absolute; right: 9px; top: 9px; pointer-events: none;
  border: 4px solid transparent; border-top: 5px solid #ddd; border-bottom: 0;
}
.drop select {
  appearance: none; width: 100%; height: 24px; padding: 0 4px; line-height: 20px;
  border: 1px solid var(--line); border-radius: 4px; background: none;
}
.drop option { color: #222; }

.params {
  position: relative; flex: none; margin-right: 9px; padding: 12px 11px 0 17px; height: 366px;
  border: 1px solid #3f8a5c; border-radius: 0 4px 4px 0;
}
.cats {
  position: absolute; right: 100%; top: -6px; width: 28px; height: 154px; padding-top: 5px;
  background: var(--panel); border-radius: 6px 0 0 6px;
}
.cat { width: 28px; height: 29px; border: 0; padding: 0; background: none; display: grid; place-items: center; }
.cat.on { background: var(--green); border-radius: 4px 0 0 4px; }
.groups { display: grid; gap: 18px; color: #b9b9bb; }
.groups section { display: grid; gap: 5px; }
.groups h3 { display: flex; align-items: center; height: 24px; margin-bottom: 3px; font-size: 13px; line-height: 20px; gap: 10px; }
.rule { flex: 1; height: 1px; background: var(--line); }
.groups h3 svg:last-child { margin-right: 8px; }
.row { display: grid; grid-template-columns: 165px 130px; justify-content: space-between; align-items: center; min-height: 24px; padding-left: 12px; line-height: 18px; }
.row .drop, .num input { color: #f0f0f0; }
.num { display: flex; height: 24px; align-items: center; padding: 0 3px; border: 1px solid var(--line); border-radius: 4px; color: #88888a; }
.num input { flex: 1; width: 0; border: 0; padding: 0; background: none; outline: 0; }
.tick input { appearance: none; display: block; width: 16px; height: 16px; margin: 0; border: 1px solid #77777a; border-radius: 2px; }
.vbar { position: absolute; right: 1px; top: 1px; width: 6px; height: 342px; border-radius: 3px; background: #98989a; }

.hint { position: relative; flex: 1; min-height: 0; margin: 16px 9px 0 10px; border-radius: 4px; background: #363638; overflow: hidden; }
.hint > svg { width: 100%; height: 100%; }
.fold { position: absolute; right: 10px; top: 9px; }

/* taskbar */
.taskbar {
  height: 40px; flex: none; display: flex; color: #111;
  background: linear-gradient(90deg, #dedcec, #d2e8ee 32%, #cbefed 45%, #d0efe1 65%, #d4f2e4);
  font-family: var(--sys);
}
.start { width: 48px; }
.search { width: 288px; display: flex; align-items: center; padding: 0 10px 0 12px; gap: 9px; background: #fff; border: 1px solid #c8c8d0; }
.search input { flex: 1; width: 0; border: 0; padding: 0; outline: 0; background: none; font-size: 14px; }
.search input::placeholder { color: #333; opacity: 1; }
.pins { display: flex; }
.pin { width: 49px; }
.current { background: #eaf7f8; box-shadow: inset 0 -2px #1a6fbf; }
.tray { margin-left: auto; display: flex; align-items: center; gap: 8px; }
.clock { width: 58px; display: grid; text-align: center; font-size: 12px; line-height: 18px; }
.note { position: relative; width: 32px; height: 30px; margin-right: 17px; }
.badge {
  position: absolute; right: 0; bottom: 0; width: 16px; height: 16px; border-radius: 8px;
  border: 1px solid #888; background: #d2d8d8; font-size: 11px; line-height: 14px; text-align: center;
}
```
